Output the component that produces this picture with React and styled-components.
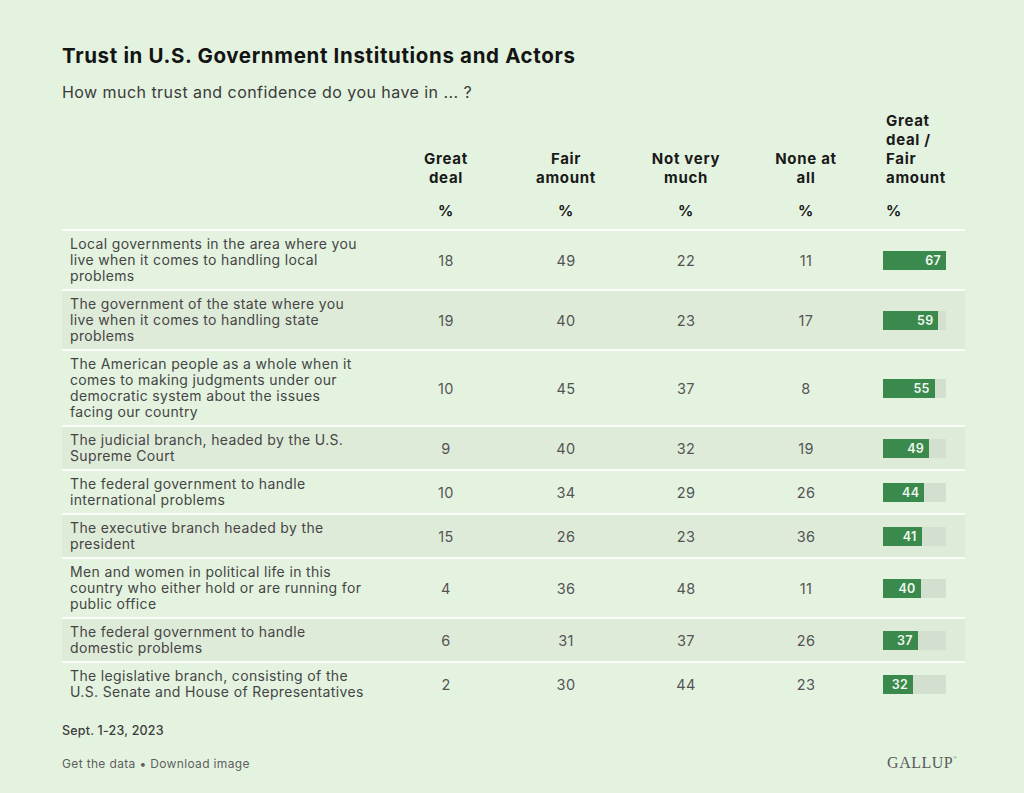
import React from "react";
import styled, { createGlobalStyle } from "styled-components";

const GlobalStyle = createGlobalStyle`
  html, body {
    margin: 0;
    padding: 0;
    background: #e4f3e0;
  }
  body {
    font-family: Inter, "Noto Sans", "Liberation Sans", sans-serif;
    color: #222;
  }
`;

const rows = [
  { label: "Local governments in the area where you live when it comes to handling local problems", values: [18, 49, 22, 11], total: 67 },
  { label: "The government of the state where you live when it comes to handling state problems", values: [19, 40, 23, 17], total: 59 },
  { label: "The American people as a whole when it comes to making judgments under our democratic system about the issues facing our country", values: [10, 45, 37, 8], total: 55 },
  { label: "The judicial branch, headed by the U.S. Supreme Court", values: [9, 40, 32, 19], total: 49 },
  { label: "The federal government to handle international problems", values: [10, 34, 29, 26], total: 44 },
  { label: "The executive branch headed by the president", values: [15, 26, 23, 36], total: 41 },
  { label: "Men and women in political life in this country who either hold or are running for public office", values: [4, 36, 48, 11], total: 40 },
  { label: "The federal government to handle domestic problems", values: [6, 31, 37, 26], total: 37 },
  { label: "The legislative branch, consisting of the U.S. Senate and House of Representatives", values: [2, 30, 44, 23], total: 32 },
];

const columns = [
  ["Great", "deal"],
  ["Fair", "amount"],
  ["Not very", "much"],
  ["None at", "all"],
];

const Page = styled.div`
  width: 1024px;
  height: 793px;
  box-sizing: border-box;
  padding: 43px 0 0 62px;
  background: #e4f3e0;
`;

const Title = styled.h1`
  margin: 0;
  font-size: 20.5px;
  line-height: 26px;
  font-weight: 700;
  color: #141414;
  letter-spacing: 0.65px;
`;

const Subtitle = styled.p`
  margin: 13px 0 0;
  font-size: 16px;
  line-height: 20px;
  color: #3a3a3a;
  letter-spacing: 0.45px;
`;

const Table = styled.div`
  width: 903px;
  margin-top: 9px;
`;

const Grid = styled.div`
  display: grid;
  grid-template-columns: 324px repeat(4, 120px) 99px;
  align-items: center;
`;

const HeaderRow = styled(Grid)`
  align-items: end;
  padding-bottom: 9px;
`;

const HeadCell = styled.div`
  display: flex;
  flex-direction: column;
  align-items: ${(p) => (p.$left ? "flex-start" : "center")};
  padding-left: ${(p) => (p.$left ? "20px" : "0")};
  font-size: 15px;
  line-height: 19px;
  font-weight: 700;
  color: #1a1a1a;
  letter-spacing: 0.7px;
  white-space: nowrap;
  text-align: ${(p) => (p.$left ? "left" : "center")};
`;

const Percent = styled.span`
  margin-top: 14px;
`;

const Row = styled(Grid)`
  border-top: 2px solid #fbfdfa;
  padding: 5px 0;
  background: ${(p) => (p.$shaded ? "#dfebd9" : "transparent")};
`;

const Label = styled.div`
  width: 295px;
  padding-left: 8px;
  font-size: 14px;
  line-height: 16px;
  color: #454545;
  letter-spacing: 0.35px;
`;

const Num = styled.div`
  text-align: center;
  font-size: 14.5px;
  color: #555;
  letter-spacing: 0.4px;
`;

const BarCell = styled.div`
  padding-left: 17px;
`;

const Track = styled.div`
  width: 63px;
  height: 19px;
  background: #d3e0cf;
`;

const Fill = styled.div`
  height: 100%;
  background: #3a8a4e;
  color: #f2f7f0;
  font-size: 12.5px;
  font-weight: 600;
  line-height: 19px;
  letter-spacing: 0.3px;
  text-align: right;
  padding-right: 5px;
  box-sizing: border-box;
`;

const Footer = styled.div`
  width: 903px;
  margin-top: 18px;
`;

const DateLine = styled.div`
  font-size: 12.5px;
  font-weight: 500;
  color: #3c3c3c;
  line-height: 16px;
  letter-spacing: 0.2px;
`;

const Bottom = styled.div`
  display: flex;
  justify-content: space-between;
  align-items: center;
  margin-top: 15px;
`;

const Links = styled.div`
  font-size: 12px;
  color: #5f5f5f;
  letter-spacing: 0.35px;
`;

const Logo = styled.div`
  font-family: "Liberation Serif", "DejaVu Serif", serif;
  font-size: 16px;
  letter-spacing: 0.5px;
  color: #5a5a5a;
  padding-right: 8px;

  sup {
    font-size: 5px;
    vertical-align: 9px;
    letter-spacing: 0;
  }
`;

export default function App() {
  const max = Math.max(...rows.map((r) => r.total));
  return (
    <>
      <GlobalStyle />
      <Page>
        <Title>Trust in U.S. Government Institutions and Actors</Title>
        <Subtitle>How much trust and confidence do you have in ... ?</Subtitle>
        <Table>
          <HeaderRow>
            <div />
            {columns.map((c) => (
              <HeadCell key={c[0]}>
                <span>{c[0]}</span>
                <span>{c[1]}</span>
                <Percent>%</Percent>
              </HeadCell>
            ))}
            <HeadCell $left>
              <span>Great</span>
              <span>deal /</span>
              <span>Fair</span>
              <span>amount</span>
              <Percent>%</Percent>
            </HeadCell>
          </HeaderRow>
          {rows.map((r, i) => (
            <Row key={r.label} $shaded={i % 2 === 1}>
              <Label>{r.label}</Label>
              {r.values.map((v, j) => (
                <Num key={j}>{v}</Num>
              ))}
              <BarCell>
                <Track>
                  <Fill style={{ width: `${(r.total / max) * 100}%` }}>{r.total}</Fill>
                </Track>
              </BarCell>
            </Row>
          ))}
        </Table>
        <Footer>
          <DateLine>Sept. 1-23, 2023</DateLine>
          <Bottom>
            <Links>Get the data • Download image</Links>
            <Logo>
              GALLUP<sup>®</sup>
            </Logo>
          </Bottom>
        </Footer>
      </Page>
    </>
  );
}
